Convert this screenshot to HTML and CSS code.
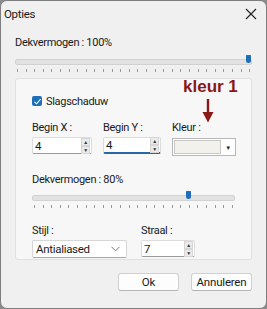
FILE: index.html
```html
<!DOCTYPE html>
<html lang="nl">
<head>
    <meta charset="UTF-8">
    <title>Opties</title>
    <link rel="stylesheet" href="styles.css">
</head>
<body>
    <div class="window">
        <div class="titlebar">
            <span class="title">Opties</span>
            <svg class="close" width="12" height="12" viewBox="0 0 12 12"><path d="M1 1L11 11M11 1L1 11" stroke="#222" stroke-width="1.1"/></svg>
        </div>

        <div class="content">
            <div class="label">Dekvermogen : 100%</div>
            <div class="slider wide">
                <div class="track"></div>
                <div class="thumb" style="left: 98.5%"></div>
                <div class="ticks"></div>
            </div>

            <div class="group">
                <div class="annot">
                    <span class="annot-text">kleur 1</span>
                    <svg class="arrow" width="12" height="24" viewBox="0 0 12 24"><path d="M6 0V15" stroke="#8a1818" stroke-width="2.4"/><path d="M0.5 13L6 23.5L11.5 13Z" fill="#8a1818"/></svg>
                </div>

                <label class="check">
                    <span class="box">
                        <svg width="9" height="9" viewBox="0 0 9 9"><path d="M1.5 4.8L3.6 6.8L7.6 2.2" stroke="#fff" stroke-width="1.1" fill="none"/></svg>
                    </span>
                    Slagschaduw
                </label>

                <div class="row fields">
                    <div class="field">
                        <div class="label">Begin X :</div>
                        <div class="spin w60">
                            <span class="val">4</span>
                            <span class="arrows"><span>&#9650;</span><span>&#9660;</span></span>
                        </div>
                    </div>
                    <div class="field">
                        <div class="label">Begin Y :</div>
                        <div class="spin w58 focus">
                            <span class="val">4</span>
                            <span class="arrows"><span>&#9650;</span><span>&#9660;</span></span>
                        </div>
                    </div>
                    <div class="field">
                        <div class="label">Kleur :</div>
                        <div class="colorpick">
                            <span class="swatch"></span>
                            <span class="drop">&#9660;</span>
                        </div>
                    </div>
                </div>

                <div class="label">Dekvermogen : 80%</div>
                <div class="slider inner">
                    <div class="track"></div>
                    <div class="thumb" style="left: 77%"></div>
                    <div class="ticks"></div>
                </div>

                <div class="row lower">
                    <div class="field">
                        <div class="label">Stijl :</div>
                        <div class="select">
                            <span>Antialiased</span>
                            <svg width="9" height="6" viewBox="0 0 9 6"><path d="M0.5 0.8L4.5 4.8L8.5 0.8" stroke="#777" fill="none"/></svg>
                        </div>
                    </div>
                    <div class="field">
                        <div class="label">Straal :</div>
                        <div class="spin w54">
                            <span class="val">7</span>
                            <span class="arrows"><span>&#9650;</span><span>&#9660;</span></span>
                        </div>
                    </div>
                </div>
            </div>

            <div class="buttons">
                <button class="btn">Ok</button>
                <button class="btn">Annuleren</button>
            </div>
        </div>
    </div>
</body>
</html>
```

FILE: styles.css
```css
body {
    margin: 0;
    background-color: #8c8c8c;
    font-family: "Roboto", sans-serif;
    font-size: 11px;
    letter-spacing: -0.3px;
    color: #1a1a1a;
}

.window {
    width: 267px;
    height: 309px;
    box-sizing: border-box;
    border: 1px solid #7d7d7d;
    border-radius: 7px;
    background-color: #f0f0f0;
    display: flex;
    flex-direction: column;
    overflow: hidden;
}

.titlebar {
    height: 25px;
    display: flex;
    align-items: center;
    justify-content: space-between;
    padding: 0 9px 0 3px;
}

.title {
    font-size: 11.5px;
}

.content {
    padding: 9px 14px 0 14px;
    display: flex;
    flex-direction: column;
}

.label {
    line-height: 15px;
}

.slider {
    position: relative;
    height: 18px;
    margin-top: 3px;
}

.track {
    height: 4px;
    margin-top: 6px;
    background-color: #e2e2e2;
    border: 1px solid #d2d2d2;
    border-radius: 2px;
}

.thumb {
    position: absolute;
    top: 2px;
    width: 5px;
    height: 8px;
    margin-left: -2px;
    background-color: #1f6fb8;
    border-radius: 1px 1px 3px 3px;
}

.ticks {
    height: 3px;
    margin: 4px 2px 0;
    background-image: repeating-linear-gradient(to right, #9a9a9a 0, #9a9a9a 1px, transparent 1px, transparent 8.6px);
}

.group {
    position: relative;
    margin-top: 7px;
    height: 182px;
    box-sizing: border-box;
    background-color: #f7f7f7;
    border: 1px solid #e0e0e0;
    border-radius: 3px;
    padding: 16px 16px 0 16px;
    display: flex;
    flex-direction: column;
}

.annot {
    position: absolute;
    left: 167px;
    top: -2px;
    display: flex;
    flex-direction: column;
    align-items: center;
}

.annot-text {
    font-family: "Liberation Sans", Arial, sans-serif;
    font-weight: bold;
    font-size: 17px;
    letter-spacing: 0;
    color: #8a1818;
    line-height: 20px;
}

.arrow {
    margin: 2px 0 0 -4px;
}

.check {
    display: flex;
    align-items: center;
    gap: 4px;
    height: 12px;
}

.box {
    width: 10px;
    height: 10px;
    background-color: #1f6fb8;
    border-radius: 2px;
    display: flex;
    align-items: center;
    justify-content: center;
}

.row {
    display: flex;
}

.fields {
    margin-top: 13px;
    gap: 11px;
}

.field {
    display: flex;
    flex-direction: column;
    gap: 2px;
}

.spin {
    height: 17px;
    box-sizing: border-box;
    background-color: #fff;
    border: 1px solid #dcdcdc;
    border-bottom-color: #9a9a9a;
    border-radius: 2px;
    display: flex;
    align-items: center;
    justify-content: space-between;
    padding-left: 2px;
}

.w60 { width: 60px; }
.w58 { width: 58px; }
.w54 { width: 54px; }

.spin.focus {
    border-bottom: 2px solid #2a66a8;
}

.val {
    font-size: 11.5px;
}

.arrows {
    display: flex;
    flex-direction: column;
    font-size: 5px;
    line-height: 6px;
    color: #333;
    margin-right: 1px;
}

.arrows span {
    background-color: #eaeaea;
    border: 1px solid #d6d6d6;
    padding: 0 1px;
}

.colorpick {
    width: 64px;
    height: 18px;
    box-sizing: border-box;
    margin-top: 1px;
    border: 1px solid #b8b8b8;
    background-color: #fff;
    display: flex;
    align-items: stretch;
    padding: 1px;
    gap: 1px;
}

.swatch {
    flex: 1;
    background-color: #f2f1ec;
    border: 1px solid #c8c8c8;
}

.drop {
    width: 12px;
    font-size: 6px;
    display: flex;
    align-items: center;
    justify-content: center;
    color: #222;
}

.group > .label {
    margin-top: 16px;
}

.inner {
    margin-top: 2px;
}

.lower {
    margin-top: 16px;
    gap: 14px;
}

.select {
    width: 95px;
    height: 18px;
    box-sizing: border-box;
    background-color: #fff;
    border: 1px solid #d6d6d6;
    border-bottom-color: #a6a6a6;
    border-radius: 2px;
    display: flex;
    align-items: center;
    justify-content: space-between;
    padding: 0 6px 0 3px;
    font-size: 11.5px;
}

.buttons {
    display: flex;
    justify-content: flex-end;
    gap: 12px;
    margin-top: 13px;
}

.btn {
    width: 61px;
    height: 18px;
    font-family: "Roboto", sans-serif;
    font-size: 11.5px;
    letter-spacing: -0.2px;
    color: #1a1a1a;
    background-color: #fdfdfd;
    border: 1px solid #d0d0d0;
    border-bottom-color: #b5b5b5;
    border-radius: 3px;
    padding: 0;
}
```
